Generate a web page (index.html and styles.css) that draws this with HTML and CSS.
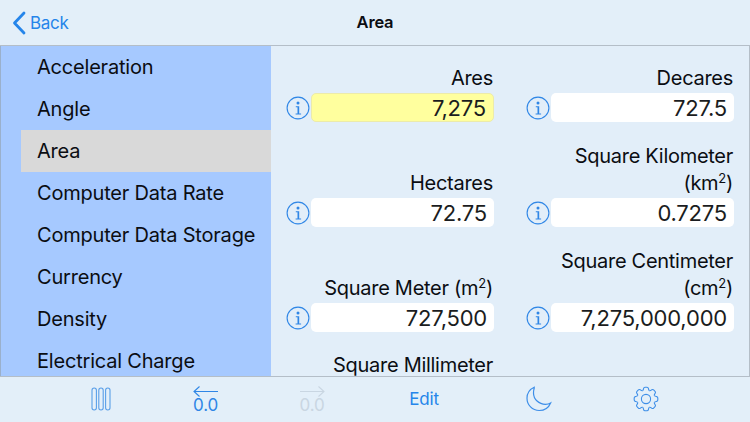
FILE: index.html
```html
<!DOCTYPE html>
<html lang="en">
<head>
<meta charset="utf-8">
<title>Area</title>
<link rel="stylesheet" href="styles.css">
</head>
<body>
<svg class="defs" width="0" height="0" aria-hidden="true">
  <symbol id="info" viewBox="0 0 24 24">
    <circle cx="12" cy="12" r="10.9" fill="none" stroke="#2f86e6" stroke-width="1.1"/>
    <circle cx="12" cy="6.900" r="1.500" fill="#2f86e6"/>
    <path d="M9.800 10.200h3.400v7.300h1.900v1.100h-5.500v-1.100h1.900v-6.200h-1.700z" fill="#2f86e6"/>
  </symbol>
  <symbol id="tooth" viewBox="0 0 26 26">
    <path d="M9.560 4.690C10.400 4.200 10.500 3 10.600 2.400 10.800 1.500 11.100 1.200 12 1.200h2c.9 0 1.200.3 1.400 1.200.1.600.2 1.800 1.040 2.290"/>
  </symbol>
</svg>
<div class="app">
  <header class="nav">
    <a class="back">
      <svg class="chevron" viewBox="0 0 14 24"><path d="M12 2 2.500 12 12 22" fill="none" stroke="#2585ea" stroke-width="2.800" stroke-linecap="round" stroke-linejoin="round"/></svg>
      <span>Back</span>
    </a>
    <h1 class="title">Area</h1>
  </header>
  <div class="body">
    <nav class="side">
      <div class="item">Acceleration</div>
      <div class="item">Angle</div>
      <div class="item selected">Area</div>
      <div class="item">Computer Data Rate</div>
      <div class="item">Computer Data Storage</div>
      <div class="item">Currency</div>
      <div class="item">Density</div>
      <div class="item">Electrical Charge</div>
    </nav>
    <main class="grid">
      <div class="cell">
        <div class="label">Ares</div>
        <div class="row"><svg class="info"><use href="#info"/></svg><div class="field active">7,275</div></div>
      </div>
      <div class="cell">
        <div class="label">Decares</div>
        <div class="row"><svg class="info"><use href="#info"/></svg><div class="field">727.5</div></div>
      </div>
      <div class="cell">
        <div class="label">Hectares</div>
        <div class="row"><svg class="info"><use href="#info"/></svg><div class="field">72.75</div></div>
      </div>
      <div class="cell">
        <div class="label">Square Kilometer (km<sup>2</sup>)</div>
        <div class="row"><svg class="info"><use href="#info"/></svg><div class="field">0.7275</div></div>
      </div>
      <div class="cell">
        <div class="label">Square Meter (m<sup>2</sup>)</div>
        <div class="row"><svg class="info"><use href="#info"/></svg><div class="field">727,500</div></div>
      </div>
      <div class="cell">
        <div class="label">Square Centimeter (cm<sup>2</sup>)</div>
        <div class="row"><svg class="info"><use href="#info"/></svg><div class="field">7,275,000,000</div></div>
      </div>
      <div class="cell cell-clipped">
        <div class="label">Square Millimeter</div>
      </div>
    </main>
  </div>
  <footer class="bar">
    <div class="tool">
      <svg class="ico-cols" viewBox="0 0 20 24" fill="none" stroke="#5a9fe8" stroke-width="1.100">
        <rect x="1" y="1" width="4.400" height="22" rx="2.200"/>
        <rect x="7.800" y="1" width="4.400" height="22" rx="2.200"/>
        <rect x="14.600" y="1" width="4.400" height="22" rx="2.200"/>
      </svg>
    </div>
    <div class="tool stack">
      <svg class="ico-arrow" viewBox="0 0 26 11" fill="none" stroke="#2f86e6" stroke-width="1.100"><path d="M25 5.500H1M6.500.5 1 5.500l5.500 5"/></svg>
      <span class="num">0.0</span>
    </div>
    <div class="tool stack off">
      <svg class="ico-arrow" viewBox="0 0 26 11" fill="none" stroke="#c9d6e2" stroke-width="1.100"><path d="M1 5.500h24M19.500.5 25 5.500l-5.500 5"/></svg>
      <span class="num">0.0</span>
    </div>
    <div class="tool edit">Edit</div>
    <div class="tool">
      <svg class="ico-moon" viewBox="0 0 26 26" fill="none" stroke="#3d8ee8" stroke-width="1.200"><path d="M8.200 1.200C3.600 3.300 1 7.500 1 12.200 1 19 6.400 24.500 13.200 24.500c5 0 9.500-2.900 11.400-7.500-1.500.9-3.500 1.300-5.200 1.300-6.400 0-11.900-5-11.900-11.400 0-1.600.2-3.200.7-4.700z"/></svg>
    </div>
    <div class="tool">
      <svg class="ico-gear" viewBox="0 0 26 26" fill="none" stroke="#3d8ee8" stroke-width="1.100" stroke-linejoin="round">
        <circle cx="13" cy="13" r="4.600"/>
        <use href="#tooth" width="26" height="26"/>
        <use href="#tooth" width="26" height="26" transform="rotate(45 13 13)"/>
        <use href="#tooth" width="26" height="26" transform="rotate(90 13 13)"/>
        <use href="#tooth" width="26" height="26" transform="rotate(135 13 13)"/>
        <use href="#tooth" width="26" height="26" transform="rotate(180 13 13)"/>
        <use href="#tooth" width="26" height="26" transform="rotate(225 13 13)"/>
        <use href="#tooth" width="26" height="26" transform="rotate(270 13 13)"/>
        <use href="#tooth" width="26" height="26" transform="rotate(315 13 13)"/>
      </svg>
    </div>
  </footer>
</div>
</body>
</html>
```
FILE: styles.css
```css
* { box-sizing: border-box; }
html, body { margin: 0; padding: 0; }
body {
  width: 750px;
  height: 422px;
  overflow: hidden;
  background: #e2eef9;
  color: #0b0d12;
  font-family: Inter, "Liberation Sans", sans-serif;
}
.defs { display: block; height: 0; }
.app { display: flex; flex-direction: column; width: 750px; height: 422px; }

.nav {
  flex: 0 0 46px;
  display: flex;
  align-items: center;
  justify-content: center;
  padding-bottom: 2px;
  position: relative;
  background: #e3eff9;
  border-bottom: 1px solid #b4bec8;
}
.back {
  position: absolute;
  left: 12px;
  top: 11px;
  display: flex;
  align-items: center;
  gap: 4px;
  color: #2585ea;
  font-size: 17px;
  letter-spacing: -.3px;
}
.chevron { width: 14px; height: 24px; }
.title { margin: 0; font-size: 16.500px; font-weight: 600; letter-spacing: -.2px; }

.body { flex: 1 1 0; min-height: 0; display: flex; border-right: 1px solid #b4bec8; }
.side {
  flex: 0 0 271px;
  overflow: hidden;
  background: #a6c9ff;
  border-left: 1px solid #9ab0cc;
  padding-left: 20px;
}
.item {
  height: 42px;
  padding-left: 16px;
  display: flex;
  align-items: center;
  font-size: 20px;
  letter-spacing: -.2px;
  white-space: nowrap;
}
.selected { background: #d9d9d9; }

.grid {
  flex: 1 1 0;
  min-width: 0;
  overflow: hidden;
  display: grid;
  grid-template-columns: 208px 208px;
  grid-template-rows: 76px 105px 105px 44px;
  column-gap: 32px;
  padding-left: 15px;
}
.cell { display: flex; flex-direction: column; justify-content: flex-end; min-width: 0; }
.cell-clipped { justify-content: flex-start; padding-top: 20px; }
.label {
  margin: 0 1px 1px 26px;
  text-align: right;
  font-size: 20px;
  line-height: 27px;
  letter-spacing: -.28px;
}
sup { font-size: 13px; line-height: 0; vertical-align: 7px; }
.row { display: flex; align-items: center; gap: 1px; }
.info { flex: 0 0 24px; width: 24px; height: 24px; }
.field {
  flex: 1 1 0;
  height: 29px;
  min-width: 0;
  padding-right: 7px;
  display: flex;
  align-items: center;
  justify-content: flex-end;
  background: #fff;
  border-radius: 5px;
  font-size: 22px;
  letter-spacing: -.2px;
  color: #1a1c20;
}
.active { background: #ffff9e; border: 1px solid #ecebaa; }

.bar {
  flex: 0 0 46px;
  display: grid;
  grid-template-columns: 104px 105px 108px 116px 114px 99px;
  padding-left: 49px;
  padding-bottom: 2px;
  background: #e3eff9;
  border-top: 1px solid #b4bec8;
}
.tool { display: flex; align-items: center; justify-content: center; }
.stack { flex-direction: column; gap: 2px; color: #2f86e6; padding-top: 1px; }
.off { color: #c9d6e2; }
.num { font-size: 17px; line-height: 13px; letter-spacing: -.2px; }
.edit { color: #2585ea; font-size: 17px; letter-spacing: -.2px; }
.ico-cols { width: 20px; height: 24px; }
.ico-arrow { width: 26px; height: 11px; }
.ico-moon { width: 26px; height: 26px; }
.ico-gear { width: 26px; height: 26px; }
```
